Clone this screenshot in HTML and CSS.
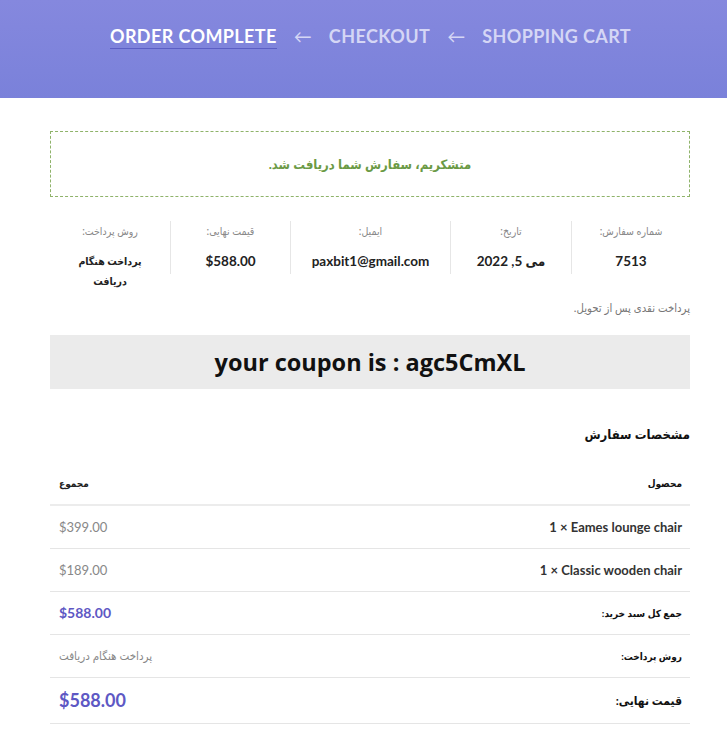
FILE: index.html
```html
<!DOCTYPE html>
<html lang="fa" dir="rtl">
<head>
<meta charset="utf-8">
<title>Order complete</title>
<link rel="stylesheet" href="styles.css">
</head>
<body>
<header class="hero">
  <nav class="steps" dir="ltr">
    <span class="step active">Order Complete</span>
    <span class="arrow">&larr;</span>
    <span class="step">Checkout</span>
    <span class="arrow">&larr;</span>
    <span class="step">Shopping Cart</span>
  </nav>
</header>
<main class="container">
  <div class="notice">متشکریم، سفارش شما دریافت شد.</div>
  <ul class="overview">
    <li class="ov-item w119"><span class="ov-label">شماره سفارش:</span><strong class="ov-value">7513</strong></li>
    <li class="ov-item w121"><span class="ov-label">تاریخ:</span><strong class="ov-value">می 5, 2022</strong></li>
    <li class="ov-item w160"><span class="ov-label">ایمیل:</span><strong class="ov-value">paxbit1@gmail.com</strong></li>
    <li class="ov-item w120"><span class="ov-label">قیمت نهایی:</span><strong class="ov-value">$588.00</strong></li>
    <li class="ov-item w120 last"><span class="ov-label">روش پرداخت:</span><strong class="ov-value fa-val">پرداخت هنگام دریافت</strong></li>
  </ul>
  <p class="cod">پرداخت نقدی پس از تحویل.</p>
  <div class="coupon" dir="ltr">your coupon is : agc5CmXL</div>
  <h2 class="details-title">مشخصات سفارش</h2>
  <table class="order-table">
    <thead>
      <tr><th class="c-name">محصول</th><th class="c-total">مجموع</th></tr>
    </thead>
    <tbody>
      <tr><td class="c-name prod"><bdi dir="ltr">1 &times; Eames lounge chair</bdi></td><td class="c-total muted">$399.00</td></tr>
      <tr><td class="c-name prod"><bdi dir="ltr">1 &times; Classic wooden chair</bdi></td><td class="c-total muted">$189.00</td></tr>
    </tbody>
    <tfoot>
      <tr><th class="c-name">جمع کل سبد خرید:</th><td class="c-total price">$588.00</td></tr>
      <tr><th class="c-name">روش پرداخت:</th><td class="c-total muted fa">پرداخت هنگام دریافت</td></tr>
      <tr class="grand"><th class="c-name">قیمت نهایی:</th><td class="c-total price big">$588.00</td></tr>
    </tfoot>
  </table>
</main>
</body>
</html>
```
FILE: styles.css
```css
* { box-sizing: border-box; }
html, body { margin: 0; padding: 0; }
body {
  background: #fff;
  color: #222;
  font-family: "Lato", "DejaVu Sans Condensed", "DejaVu Sans", sans-serif;
}
.hero {
  height: 98px;
  background: linear-gradient(180deg, #8588de 0%, #7a81da 100%);
  display: flex;
  justify-content: center;
  padding: 24px 0 0 14px;
}
.steps {
  display: flex;
  align-items: flex-start;
  gap: 17px;
  height: 26px;
}
.step {
  font-weight: 700;
  font-size: 18px;
  letter-spacing: 0.4px;
  text-transform: uppercase;
  color: #d5d6f5;
  line-height: 24px;
}
.step.active {
  color: #fff;
  border-bottom: 1px solid #5c5fc4;
}
.arrow {
  font-size: 18px;
  color: #d5d6f5;
  line-height: 24px;
}
.container {
  width: 640px;
  margin: 33px 37px 0 0;
}
.notice {
  border: 1px dashed #8fb36a;
  height: 66px;
  display: flex;
  align-items: center;
  justify-content: center;
  color: #6b9a45;
  font-weight: 700;
  font-size: 13px;
}
.overview {
  list-style: none;
  margin: 24px 0 0;
  padding: 0;
  display: flex;
}
.ov-item {
  flex: 0 0 auto;
  height: 53px;
  display: flex;
  flex-direction: column;
  align-items: center;
  text-align: center;
  border-left: 1px solid #e6e6e6;
  padding: 2px 10px 0;
}
.w119 { width: 119px; }
.w120 { width: 120px; }
.w121 { width: 121px; }
.w160 { width: 160px; }
.ov-item.last { border-left: none; padding: 2px 24px 0; }
.ov-label {
  font-size: 10.5px;
  color: #888;
  line-height: 16px;
}
.ov-value {
  margin-top: 12px;
  font-size: 13.5px;
  font-weight: 700;
  color: #222;
  line-height: 20px;
}
.ov-value.fa-val { font-size: 10.5px; line-height: 20px; }
.cod {
  margin: 26px 0 0;
  font-size: 11.3px;
  color: #777;
  line-height: 16px;
}
.coupon {
  margin-top: 19px;
  height: 54px;
  background: #ebebeb;
  display: flex;
  align-items: center;
  justify-content: center;
  font-family: "Open Sans", sans-serif;
  font-size: 23.5px;
  font-weight: 700;
  color: #111;
}
.details-title {
  margin: 34px 0 0;
  font-size: 13px;
  font-weight: 700;
  color: #111;
  line-height: 22px;
}
.order-table {
  margin-top: 17px;
  width: 100%;
  border-collapse: collapse;
}
.order-table th, .order-table td {
  padding: 0 8px 0 9px;
  height: 43px;
  border-bottom: 1px solid #e5e5e5;
  font-size: 10px;
  vertical-align: middle;
}
.order-table thead th { border-bottom: 2px solid #ececec; font-weight: 700; font-size: 10px; }
.c-name { text-align: right; font-weight: 700; color: #111; }
.c-total { text-align: left; }
.prod { font-weight: 700; color: #333; font-size: 13px !important; }
.muted { color: #888; font-weight: 400; font-size: 13px !important; }
.fa { font-size: 11.5px !important; }
.price { color: #5e58c4; font-weight: 700; font-size: 14px !important; }
.price.big { font-size: 18px !important; }
.grand th { font-size: 12px; height: 46px; }
.grand td { height: 46px; }
```
